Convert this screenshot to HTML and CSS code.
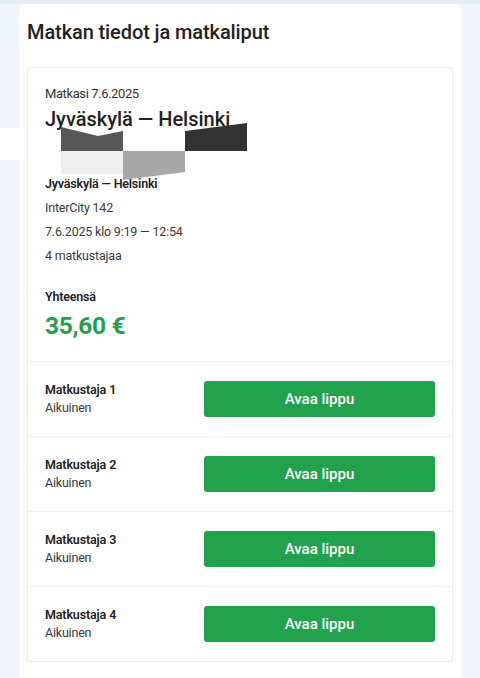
FILE: index.html
```html
<!DOCTYPE html>
<html lang="fi">

<head>
    <meta charset="UTF-8">
    <meta name="viewport" content="width=device-width, initial-scale=1.0">
    <title>Matkan tiedot ja matkaliput</title>

    <link rel="stylesheet" href="styles.css">

</head>

<body>
    <div class="topStrip"></div>
    <div class="panel">
        <h1 class="pageTitle">Matkan tiedot ja matkaliput</h1>

        <div class="tripCard">
            <div class="tripInfo">
                <div class="tripDate">Matkasi 7.6.2025</div>
                <h2 class="tripRoute">Jyväskylä — Helsinki</h2>
                <div class="routeArt"></div>
                <div class="infoLine strong">Jyväskylä — Helsinki</div>
                <div class="infoLine">InterCity 142</div>
                <div class="infoLine">7.6.2025 klo 9:19 — 12:54</div>
                <div class="infoLine">4 matkustajaa</div>
                <div class="totalLabel">Yhteensä</div>
                <div class="totalPrice">35,60 €</div>
            </div>

            <div class="passenger">
                <div class="passengerText">
                    <div class="passengerName">Matkustaja 1</div>
                    <div class="passengerType">Aikuinen</div>
                </div>
                <button class="ticketBtn">Avaa lippu</button>
            </div>
            <div class="passenger">
                <div class="passengerText">
                    <div class="passengerName">Matkustaja 2</div>
                    <div class="passengerType">Aikuinen</div>
                </div>
                <button class="ticketBtn">Avaa lippu</button>
            </div>
            <div class="passenger">
                <div class="passengerText">
                    <div class="passengerName">Matkustaja 3</div>
                    <div class="passengerType">Aikuinen</div>
                </div>
                <button class="ticketBtn">Avaa lippu</button>
            </div>
            <div class="passenger">
                <div class="passengerText">
                    <div class="passengerName">Matkustaja 4</div>
                    <div class="passengerType">Aikuinen</div>
                </div>
                <button class="ticketBtn">Avaa lippu</button>
            </div>
        </div>
    </div>

    <!-- blocky graphic lying over the route title -->
    <svg class="blocks" width="250" height="185" viewBox="0 0 250 185">
        <rect x="0" y="128" width="19" height="32" fill="#ffffff" />
        <polygon points="61,127 98,136 123,131 123,151 61,151" fill="#575757" />
        <polygon points="185,131 247,123 247,151 185,151" fill="#333333" />
        <rect x="61" y="151" width="62" height="23" fill="#efefef" />
        <polygon points="123,151 185,151 185,172 123,180" fill="#a8a8a8" />
    </svg>
</body>

</html>
```

FILE: styles.css
```css
body {
    margin: 0;
    background: #f0f6fc;
    font-family: Roboto, "Liberation Sans", sans-serif;
    color: #222;
}

.topStrip {
    height: 4px;
    background: #e6edf4;
}

.panel {
    width: 426px;
    margin-left: 19px;
    padding: 16px 8px 20px;
    background: #fff;
    border-radius: 4px 4px 0 0;
}

.pageTitle {
    margin: 0 0 23px;
    font-size: 20px;
    line-height: 24px;
    font-weight: 500;
    letter-spacing: -0.1px;
    color: #222;
}

.tripCard {
    border: 1px solid #ececec;
    border-radius: 2px;
}

.tripInfo {
    padding: 16px 17px 19px;
}

.tripDate {
    font-size: 13px;
    line-height: 20px;
    letter-spacing: -0.4px;
    color: #333;
}

.tripRoute {
    margin: 3px 0 0;
    font-size: 20px;
    line-height: 24px;
    font-weight: 500;
    color: #222;
}

.routeArt {
    height: 41px;
}

.infoLine {
    font-size: 12.5px;
    line-height: 24px;
    letter-spacing: -0.2px;
    color: #3a3a3a;
}

.strong {
    font-weight: 600;
    color: #222;
}

.totalLabel {
    margin-top: 20px;
    font-size: 12.5px;
    line-height: 18px;
    font-weight: 600;
    letter-spacing: -0.2px;
    color: #222;
}

.totalPrice {
    margin-top: 4px;
    font-size: 24.5px;
    line-height: 32px;
    font-weight: 700;
    letter-spacing: -0.3px;
    color: #22a04d;
}

.passenger {
    display: grid;
    grid-template-columns: 1fr 231px;
    align-items: center;
    padding: 19px 17px;
    border-top: 1px solid #f0f0f0;
}

.passengerName {
    font-size: 12.5px;
    line-height: 18px;
    font-weight: 600;
    letter-spacing: -0.15px;
    color: #222;
}

.passengerType {
    font-size: 12.5px;
    line-height: 18px;
    letter-spacing: -0.2px;
    color: #3a3a3a;
}

.ticketBtn {
    height: 36px;
    border: none;
    border-radius: 3px;
    background: #22a24d;
    color: #fff;
    font-family: Roboto, "Liberation Sans", sans-serif;
    font-size: 15px;
    font-weight: 500;
}

.blocks {
    position: absolute;
    top: 0;
    left: 0;
}
```
